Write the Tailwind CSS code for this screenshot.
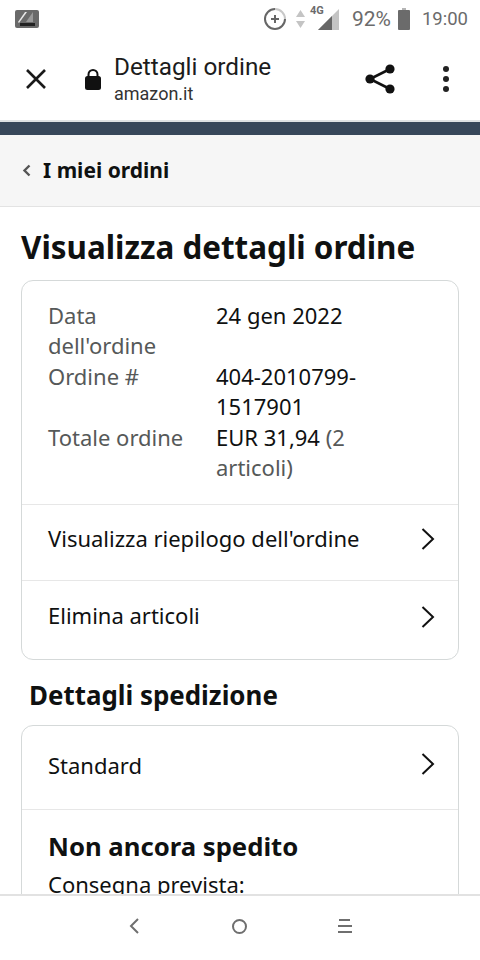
<!DOCTYPE html>
<html lang="en">
  <head>
    <meta charset="UTF-8" />
    <meta name="viewport" content="width=device-width, initial-scale=1.0" />
    <title>Dettagli ordine</title>
    <script src="https://cdn.jsdelivr.net/npm/@tailwindcss/browser@4"></script>
  </head>
  <body class="bg-white font-['Noto_Sans',sans-serif]">
    <div class="w-[480px] h-[960px] flex flex-col overflow-hidden">
      <!-- status bar -->
      <div class="h-[38px] shrink-0 flex items-center pl-[15px] pr-[12px] font-['Roboto',sans-serif] text-[#6b6b6b]">
        <svg width="25" height="20" viewBox="0 0 25 20">
          <rect x="0" y="1" width="24" height="18" rx="2" fill="#6a6a6a" />
          <path d="M3 13 10 3h2L4 14z" fill="#e8e8e8" />
          <path d="M11 13 18 3v10z" fill="#9a9a9a" />
          <rect x="5" y="14" width="15" height="3" fill="#222" />
        </svg>
        <div class="ml-auto flex items-center">
          <svg width="24" height="24" viewBox="0 0 24 24" fill="none">
            <path d="M12 2a10 10 0 1 0 10 10" stroke="#666" stroke-width="2" />
            <path d="M12 2a10 10 0 0 1 10 10" stroke="#c8c8c8" stroke-width="2" />
            <path d="M12 8v8M8 12h8" stroke="#666" stroke-width="2" />
          </svg>
          <svg class="ml-[8px]" width="11" height="20" viewBox="0 0 11 20">
            <path d="M5.5 1 10 8H1z" fill="#c4c4c4" />
            <path d="M5.5 19 10 12H1z" fill="#c4c4c4" />
          </svg>
          <div class="relative ml-[9px] w-[24px] h-[24px]">
            <svg class="absolute left-[3px] top-[2px]" width="21" height="21" viewBox="0 0 21 21">
              <path d="M21 0v21H0z" fill="#c4c4c4" />
              <path d="M14 7v14H0z" fill="#666" />
            </svg>
            <span class="absolute left-[-5px] top-[-3px] text-[11px] leading-[14px] font-bold">4G</span>
          </div>
          <span class="ml-[13px] text-[21px] leading-none">92%</span>
          <svg class="ml-[7px]" width="12" height="22" viewBox="0 0 12 22">
            <rect x="4" y="0" width="4" height="3" fill="#b5b5b5" />
            <rect x="0" y="2" width="12" height="20" rx="1" fill="#6b6b6b" />
          </svg>
          <span class="ml-[12px] text-[18.5px] leading-none">19:00</span>
        </div>
      </div>
      <!-- browser toolbar -->
      <div class="h-[84px] shrink-0 flex items-center font-['Roboto',sans-serif] border-b-2 border-[#dde1e3]">
        <svg class="ml-[24px]" width="24" height="24" viewBox="0 0 24 24" fill="none">
          <path d="M3 3 21 21M21 3 3 21" stroke="#1a1a1a" stroke-width="2.6" />
        </svg>
        <svg class="ml-[36px]" width="18" height="22" viewBox="0 0 18 22">
          <path d="M4.5 9V6.5a4.5 4.5 0 0 1 9 0V9" fill="none" stroke="#111" stroke-width="2" />
          <rect x="1" y="8" width="16" height="14" rx="2.5" fill="#111" />
        </svg>
        <div class="ml-[12px] flex flex-col">
          <span class="text-[24.3px] leading-[30px] text-[#1c1c1c]">Dettagli ordine</span>
          <span class="text-[18px] leading-[24px] text-[#333]">amazon.it</span>
        </div>
        <svg class="ml-auto" width="30" height="32" viewBox="0 0 30 32" fill="none">
          <path d="M25 6 5 16l20 10" stroke="#111" stroke-width="2.6" />
          <circle cx="25" cy="6" r="4.6" fill="#111" />
          <circle cx="5" cy="16" r="4.6" fill="#111" />
          <circle cx="25" cy="26" r="4.6" fill="#111" />
        </svg>
        <div class="ml-[48px] mr-[31px] flex flex-col gap-[4px]">
          <span class="w-[6px] h-[6px] rounded-full bg-[#222]"></span>
          <span class="w-[6px] h-[6px] rounded-full bg-[#222]"></span>
          <span class="w-[6px] h-[6px] rounded-full bg-[#222]"></span>
        </div>
      </div>
      <!-- site header strip -->
      <div class="h-[13px] shrink-0 bg-[#37475a]"></div>
      <!-- scrolling page -->
      <main class="flex-1 min-h-0 overflow-hidden text-[#0f1111]">
        <div class="h-[72px] bg-[#f6f6f6] border-b border-[#e3e3e3] flex items-center pl-[22px]">
          <svg width="9" height="13" viewBox="0 0 9 13" fill="none">
            <path d="M7.5 1.5 2.5 6.5l5 5" stroke="#555" stroke-width="2.4" />
          </svg>
          <span class="ml-[12px] text-[21px] font-bold">I miei ordini</span>
        </div>
        <div class="px-[21px]">
          <h1 class="mt-[20px] text-[31.4px] leading-[40px] font-bold">Visualizza dettagli ordine</h1>
          <section class="mt-[13px] border border-[#d5d9d9] rounded-[12px] text-[22px] leading-[30.4px]">
            <div class="pl-[26px] pr-[48px] pt-[19px] pb-[22px] border-b border-[#e7e7e7] grid grid-cols-[168px_1fr]">
              <span class="pr-[20px] text-[#565959]">Data dell'ordine</span>
              <span>24 gen 2022</span>
              <span class="pr-[20px] text-[#565959]">Ordine #</span>
              <span>404-2010799-1517901</span>
              <span class="pr-[20px] text-[#565959]">Totale ordine</span>
              <span>EUR 31,94 <span class="text-[#565959]">(2 articoli)</span></span>
            </div>
            <div class="h-[76px] px-[26px] pb-[10px] border-b border-[#e7e7e7] flex items-center justify-between">
              <span>Visualizza riepilogo dell'ordine</span>
              <svg class="mt-[2px] mr-[-4px]" width="16" height="24" viewBox="0 0 16 24" fill="none">
                <path d="M2.5 2 13 12 2.5 22" stroke="#111" stroke-width="2" />
              </svg>
            </div>
            <div class="h-[78px] px-[26px] pb-[10px] flex items-center justify-between">
              <span>Elimina articoli</span>
              <svg class="mt-[4px] mr-[-4px]" width="16" height="24" viewBox="0 0 16 24" fill="none">
                <path d="M2.5 2 13 12 2.5 22" stroke="#111" stroke-width="2" />
              </svg>
            </div>
          </section>
          <h2 class="mt-[17px] ml-[8px] text-[25.9px] leading-[36px] font-bold">Dettagli spedizione</h2>
          <section class="mt-[12px] border border-[#d5d9d9] rounded-[12px] text-[22px] leading-[30.4px]">
            <div class="h-[84px] px-[26px] pb-[6px] border-b border-[#e7e7e7] flex items-center justify-between">
              <span>Standard</span>
              <svg class="mt-[-2px] mr-[-4px]" width="16" height="24" viewBox="0 0 16 24" fill="none">
                <path d="M2.5 2 13 12 2.5 22" stroke="#111" stroke-width="2" />
              </svg>
            </div>
            <div class="px-[26px] pt-[20px] pb-[40px]">
              <h3 class="text-[25.7px] leading-[34px] font-bold">Non ancora spedito</h3>
              <p class="mt-[5px]">Consegna prevista:</p>
            </div>
          </section>
        </div>
      </main>
      <!-- android nav bar -->
      <nav class="h-[66px] shrink-0 bg-white border-t-2 border-[#e2e2e2] relative flex items-center justify-center">
        <svg class="absolute left-[128px] top-[21px]" width="12" height="18" viewBox="0 0 12 18" fill="none">
          <path d="M10 2 3 9l7 7" stroke="#6f6f6f" stroke-width="2" />
        </svg>
        <svg class="absolute left-[231px] top-[22px]" width="17" height="17" viewBox="0 0 17 17" fill="none">
          <circle cx="8.5" cy="8.5" r="6.5" stroke="#6f6f6f" stroke-width="2" />
        </svg>
        <svg class="absolute left-[337px] top-[22px]" width="16" height="16" viewBox="0 0 16 16" fill="none">
          <path d="M2 2h11M1 8h14M1 14h14" stroke="#6f6f6f" stroke-width="2" />
        </svg>
      </nav>
    </div>
  </body>
</html>
